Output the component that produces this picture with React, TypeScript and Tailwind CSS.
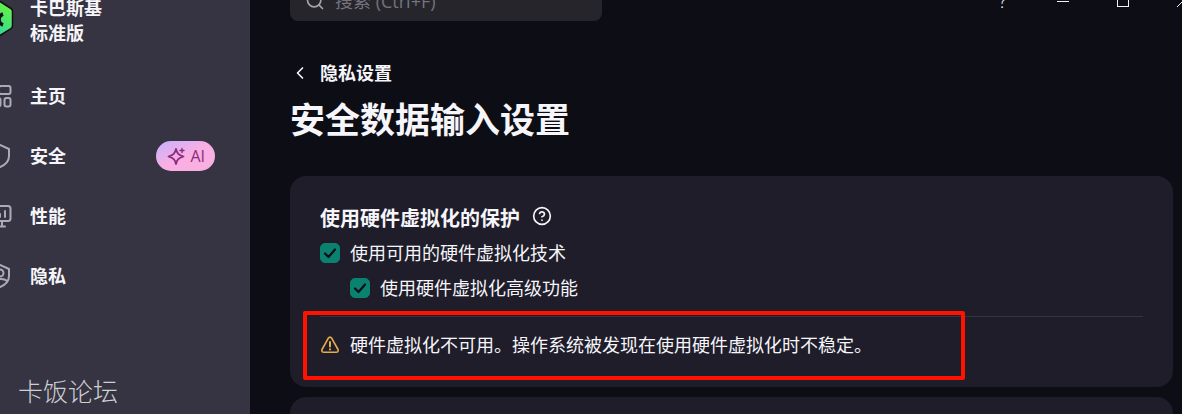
import { ChevronLeft, CircleHelp, Search } from "lucide-react";

const iconProps = {
  viewBox: "0 0 24 24",
  fill: "none",
  stroke: "currentColor",
  strokeWidth: 2,
  strokeLinecap: "round" as const,
  strokeLinejoin: "round" as const,
};

const HomeIcon = () => (
  <svg {...iconProps}>
    <rect x="1" y="2" width="7" height="8" rx="2" />
    <rect x="11" y="2" width="11.500" height="8" rx="2" />
    <rect x="1" y="14" width="11.500" height="8.500" rx="2" />
    <rect x="16.500" y="14" width="6" height="8.500" rx="2" />
  </svg>
);

const ShieldIcon = () => (
  <svg {...iconProps}>
    <path d="M11 0.500 21 5v7c0 5-3.500 9-10 11.500C4.500 21 1 17 1 12V5Z" />
  </svg>
);

const PerformanceIcon = () => (
  <svg {...iconProps}>
    <rect x="0" y="2" width="22.500" height="15" rx="2.500" />
    <path d="M7 8v5M12 10v3M17 7v6M14 17v5M8 17v5M6 22.500h11" />
  </svg>
);

const PrivacyIcon = () => (
  <svg {...iconProps}>
    <path d="M11 0.500 21 5v7c0 5-3.500 9-10 11.500C4.500 21 1 17 1 12V5Z" />
    <circle cx="12" cy="9" r="3.500" />
    <path d="M4 18.500c3-4 12-4.500 15-1.500" />
  </svg>
);

const AiIcon = () => (
  <svg {...iconProps} viewBox="0 0 20 20" strokeWidth={1.8} className="size-5">
    <path d="M10 3c1 4.500 2.500 6 7.500 7.500-5 1.500-6.500 3-7.500 7.500-1-4.500-2.500-6-7.500-7.500C7.500 9 9 7.500 10 3Z" />
    <path d="M16 2.500v4M14 4.500h4" strokeWidth={1.4} />
  </svg>
);

const WarningIcon = () => (
  <svg {...iconProps} viewBox="0 0 20 20" strokeWidth={1.6} className="size-5 shrink-0 text-[#e5ad4a]">
    <path d="M8.200 3.300Q10 0.900 11.800 3.300L18 14.500Q18.800 17.300 16 17.300H4Q1.200 17.300 2 14.500Z" />
    <path d="M10 7v4.500M10 14.200v0.200" strokeWidth={2} />
  </svg>
);

const navItems = [
  { label: "主页", icon: HomeIcon },
  { label: "安全", icon: ShieldIcon, badge: "AI" },
  { label: "性能", icon: PerformanceIcon },
  { label: "隐私", icon: PrivacyIcon },
];

const Logo = () => (
  <svg viewBox="0 0 40 40" className="size-10 shrink-0">
    <defs>
      <linearGradient id="logo" x1="0.8" y1="0" x2="0.3" y2="1">
        <stop offset="0" stopColor="#6bf53c" />
        <stop offset="1" stopColor="#2cd3a4" />
      </linearGradient>
    </defs>
    <path
      d="M16 1.500Q18 0.500 20 1.500L31 8.500Q32.500 9.500 32.500 11.500V25.500Q32.500 27.500 31 28.500L20 35.500Q18 36.500 16 35.500L5 28V9Z"
      fill="url(#logo)"
      stroke="#101014"
      strokeWidth="1.500"
    />
    <path d="M23 14q-4 1.500-4 5.500t4 5.500" fill="none" stroke="#101014" strokeWidth="3.500" />
  </svg>
);

const Sidebar = () => (
  <aside className="flex w-[250px] shrink-0 flex-col bg-[#363442]">
    <div className="-ml-5 flex gap-[10px]">
      <Logo />
      <p className="-mt-1 text-lg leading-[25px] font-bold">
        卡巴斯基
        <br />
        标准版
      </p>
    </div>
    <nav className="mt-5 -ml-3">
      <ul>
        {navItems.map(({ label, icon: Icon, badge }) => (
          <li key={label}>
            <a href="#" className="flex h-[60px] items-center pr-[35px]">
              <span className="size-6 text-[#abaab6]">
                <Icon />
              </span>
              <span className="ml-[18px] text-lg font-bold">{label}</span>
              {badge && (
                <span className="ml-auto flex h-[30px] items-center gap-1 rounded-full bg-linear-to-br from-[#c5b0ff] to-[#f9afe2] to-50% px-[10px] text-base font-medium text-[#8a2c80]">
                  <AiIcon />
                  {badge}
                </span>
              )}
            </a>
          </li>
        ))}
      </ul>
    </nav>
    <p className="mt-auto mb-2 ml-[18px] text-[25px] leading-[30px] font-light text-[#cfcfd2]">
      卡饭论坛
    </p>
  </aside>
);

const WindowControls = () => (
  <div className="-mr-10 flex shrink-0 items-center text-[#f3f3f7]">
    <button aria-label="帮助" className="w-[60px] text-xl leading-5 font-light">
      ?
    </button>
    <button aria-label="最小化" className="flex w-[60px] justify-center">
      <span className="h-px w-3 bg-current" />
    </button>
    <button aria-label="最大化" className="flex w-[60px] justify-center">
      <span className="size-3 border border-current" />
    </button>
    <button aria-label="关闭" className="flex w-[60px] justify-center">
      <svg viewBox="0 0 12 12" className="size-3" stroke="currentColor">
        <path d="M0 0l12 12M12 0 0 12" />
      </svg>
    </button>
  </div>
);

const Checkbox = ({ id, label }: { id: string; label: string }) => (
  <div className="flex h-[35px] items-center gap-[10px]">
    <span className="grid">
      <input
        id={id}
        type="checkbox"
        defaultChecked
        className="peer col-start-1 row-start-1 size-5 appearance-none rounded-[5px] border border-[#0b8270] checked:bg-[#0b8270]"
      />
      <svg
        viewBox="0 0 20 20"
        className="pointer-events-none invisible col-start-1 row-start-1 size-5 peer-checked:visible"
        fill="none"
        stroke="#0d0d15"
        strokeWidth="2.200"
        strokeLinecap="round"
        strokeLinejoin="round"
      >
        <path d="m5 10.500 3.500 3.500L15 6.500" />
      </svg>
    </span>
    <label htmlFor={id} className="text-lg">
      {label}
    </label>
  </div>
);

export default function App() {
  return (
    <div className="flex h-screen overflow-hidden bg-[#0d0d15] font-['Open_Sans','Noto_Sans_CJK_SC',sans-serif] text-[#f5f5fa]">
      <Sidebar />
      <main className="flex min-w-0 flex-1 flex-col pr-[9px] pl-10">
        <header className="-mt-[19px] flex h-10 shrink-0 items-center justify-between">
          <div className="flex h-10 w-[312px] items-center gap-[10px] rounded-lg bg-[#25252b] px-[15px]">
            <Search className="size-5 shrink-0 text-[#a5a4ae]" />
            <input
              type="search"
              aria-label="搜索"
              placeholder="搜索 (Ctrl+F)"
              className="min-w-0 flex-1 text-lg outline-none placeholder:text-[#74737d]"
            />
          </div>
          <WindowControls />
        </header>

        <a href="#" className="mt-10 flex h-6 shrink-0 items-center gap-[10px] text-lg font-bold">
          <ChevronLeft className="size-5" strokeWidth={2} />
          隐私设置
        </a>
        <h1 className="mt-3 shrink-0 text-[35px] leading-[46px] font-bold">安全数据输入设置</h1>

        <section className="relative mt-[33px] h-[211px] shrink-0 rounded-2xl bg-[#1f1d29] px-[30px] pt-[26px]">
          <div className="flex h-[33px] gap-3">
            <h2 className="text-xl leading-[33px] font-bold">使用硬件虚拟化的保护</h2>
            <button aria-label="说明" className="h-7">
              <CircleHelp className="size-5" strokeWidth={2} />
            </button>
          </div>
          <Checkbox id="virtualization" label="使用可用的硬件虚拟化技术" />
          <div className="pl-[30px]">
            <Checkbox id="advanced" label="使用硬件虚拟化高级功能" />
          </div>
          <div className="mt-[11px] flex h-14 items-center gap-[10px] border-t border-[#343341]">
            <WarningIcon />
            <p className="text-lg">硬件虚拟化不可用。操作系统被发现在使用硬件虚拟化时不稳定。</p>
          </div>
          {/* Highlight around the warning */}
          <div className="pointer-events-none absolute top-[135px] left-[13px] h-[69px] w-[662px] rounded-[2px] border-4 border-[#ff1200]" />
        </section>
        <section className="mt-[10px] h-20 shrink-0 rounded-2xl bg-[#1f1d29]" />
      </main>
    </div>
  );
}
